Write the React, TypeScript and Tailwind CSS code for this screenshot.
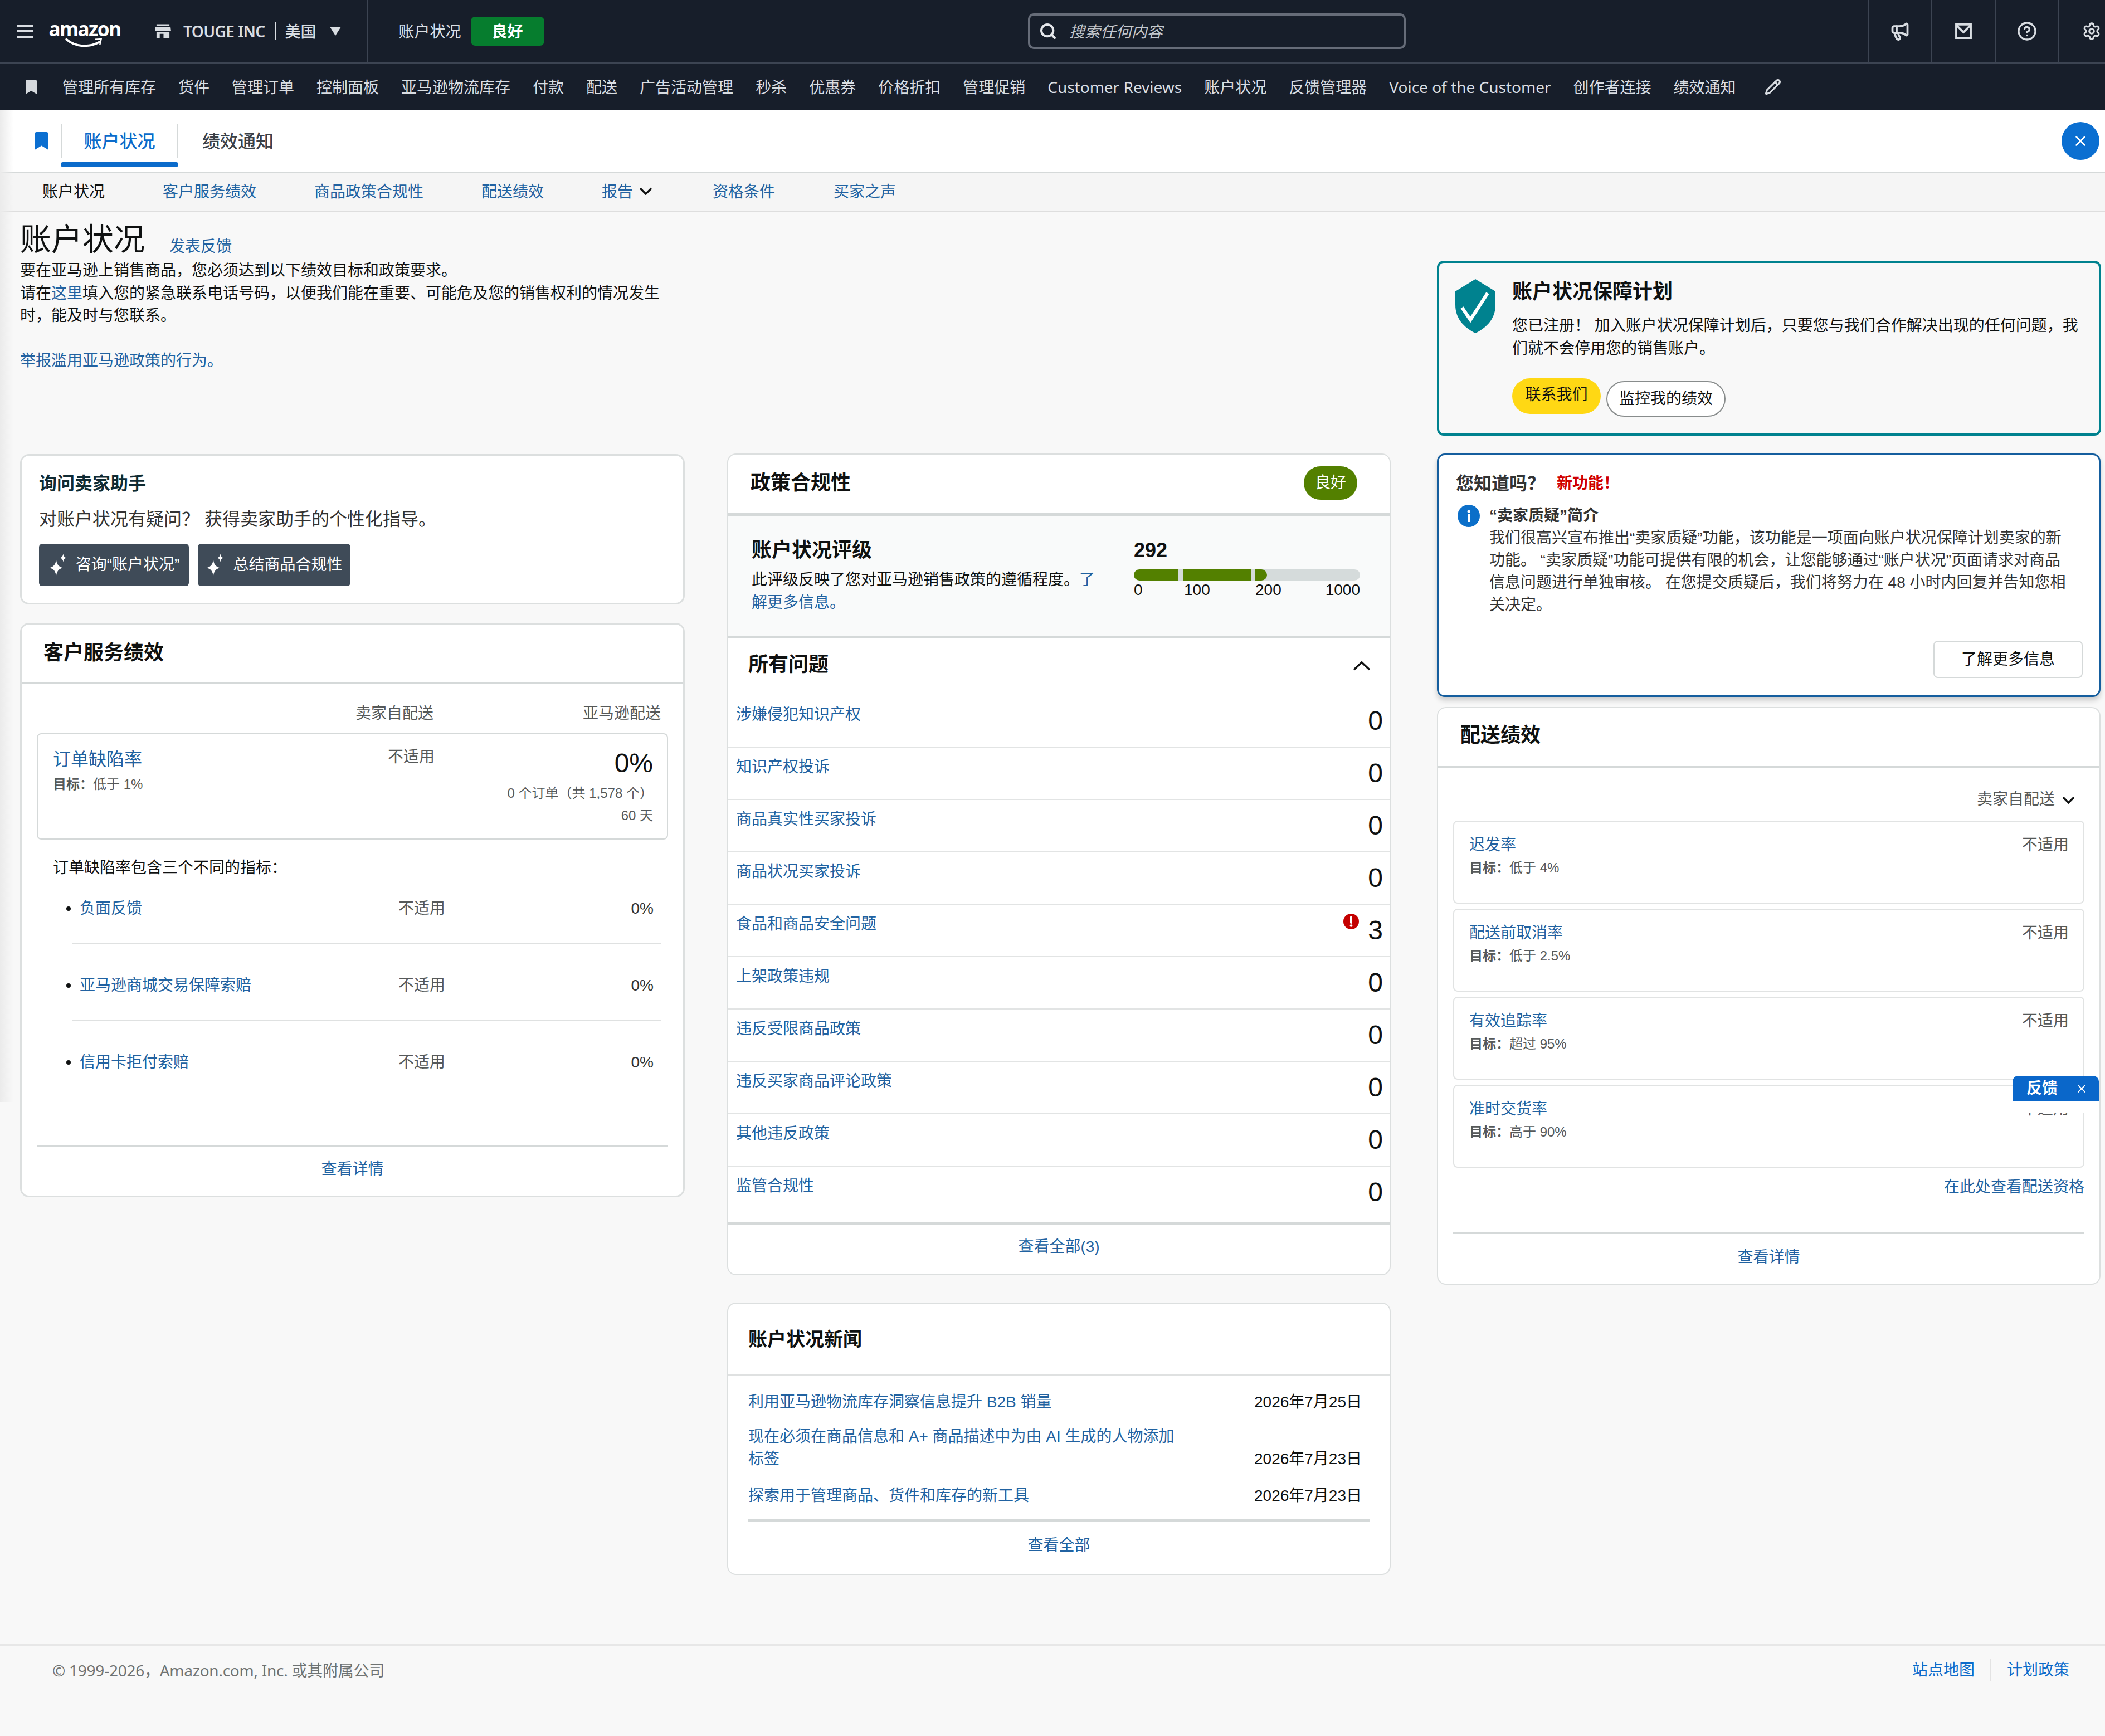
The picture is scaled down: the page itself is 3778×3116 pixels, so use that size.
import { Megaphone, CircleHelp, Settings, Search, X, Pencil } from "lucide-react";

const navItems = [
    "管理所有库存", "货件", "管理订单", "控制面板", "亚马逊物流库存", "付款", "配送", "广告活动管理", "秒杀", "优惠券",
    "价格折扣", "管理促销", "Customer Reviews", "账户状况", "反馈管理器", "Voice of the Customer", "创作者连接", "绩效通知",
];

const subNav = ["客户服务绩效", "商品政策合规性", "配送绩效"];

const issues = [
    { name: "涉嫌侵犯知识产权", count: 0 },
    { name: "知识产权投诉", count: 0 },
    { name: "商品真实性买家投诉", count: 0 },
    { name: "商品状况买家投诉", count: 0 },
    { name: "食品和商品安全问题", count: 3 },
    { name: "上架政策违规", count: 0 },
    { name: "违反受限商品政策", count: 0 },
    { name: "违反买家商品评论政策", count: 0 },
    { name: "其他违反政策", count: 0 },
];

const odrRows = ["负面反馈", "亚马逊商城交易保障索赔", "信用卡拒付索赔"];

const delivery = [
    { name: "迟发率", target: "低于 4%" },
    { name: "配送前取消率", target: "低于 2.5%" },
    { name: "有效追踪率", target: "超过 95%" },
    { name: "准时交货率", target: "高于 90%" },
];

function BookmarkIcon({ className }: { className: string }) {
    return (
        <svg viewBox="0 0 20 26" className={className} fill="currentColor">
            <path d="M3 0h14a3 3 0 0 1 3 3v23l-10-6-10 6V3a3 3 0 0 1 3-3z" />
        </svg>
    );
}

function ChevronDownIcon({ className }: { className: string }) {
    return (
        <svg viewBox="0 0 24 14" className={className} fill="none" stroke="#0f1111" strokeWidth="3.5">
            <path d="M2 2l10 10L22 2" />
        </svg>
    );
}

function Sparkle() {
    return (
        <svg viewBox="0 0 32 40" className="h-[42px] w-[34px] shrink-0" fill="currentColor">
            <path d="M13 11c1 8 4 12 11 14-7 2-10 6-11 14-1-8-4-12-11-14 7-2 10-6 11-14z" />
            <path d="M25 1c.5 4 2 6 5 7-3 1-4.500 3-5 7-.5-4-2-6-5-7 3-1 4.500-3 5-7z" />
        </svg>
    );
}

function App() {
    return (
        <div className="relative min-h-[3116px] w-[3778px] overflow-hidden bg-[#f8f8f8] text-[28px] leading-[40px] text-[#0f1111] font-['Liberation_Sans','Noto_Sans_CJK_SC',sans-serif]">
            {/* top bars */}
            <div className="bg-[#171e2a] text-[#d9dde2] font-['Noto_Sans','Noto_Sans_CJK_SC',sans-serif]">
                <div className="flex h-[114px] items-center border-b-2 border-[#3c4452]">
                    <div className="ml-[30px] flex h-[24px] w-[29px] flex-col justify-between">
                        <div className="h-[4px] bg-[#d9dde2]" />
                        <div className="h-[4px] bg-[#d9dde2]" />
                        <div className="h-[4px] bg-[#d9dde2]" />
                    </div>
                    <div className="ml-[31px] flex w-[124px] flex-col items-center pt-[6px]">
                        <span className="text-[35px] font-bold leading-[46px] tracking-[-1.500px] text-white">amazon</span>
                        <svg viewBox="0 0 90 26" className="-mt-[8px] h-[22px] w-[72px]" fill="none" stroke="white">
                            <path d="M4 4c20 17 50 19 74 6" strokeWidth="5" strokeLinecap="round" />
                            <path d="M68 4l14-1-3 13" strokeWidth="3" />
                        </svg>
                    </div>
                    <svg viewBox="0 0 30 26" className="ml-[64px] h-[26px] w-[29px]" fill="currentColor">
                        <path d="M3 0h24v3H3zM1 5h28l1 8H0zM3 15h24v11H16v-8H9v8H3z" />
                    </svg>
                    <span className="ml-[22px] font-semibold tracking-[-0.600px]">TOUGE INC</span>
                    <div className="ml-[17px] h-[32px] w-[2px] bg-[#d9dde2]" />
                    <span className="ml-[17px] font-medium">美国</span>
                    <svg viewBox="0 0 20 16" className="ml-[24px] h-[16px] w-[20px]" fill="currentColor">
                        <path d="M0 0h20L10 16z" />
                    </svg>
                    <div className="ml-[46px] h-full w-[2px] bg-[#3c4452]" />
                    <span className="ml-[56px]">账户状况</span>
                    <span className="ml-[17px] flex h-[52px] w-[132px] items-center justify-center rounded-[8px] bg-[#067d2e] font-bold text-white">良好</span>
                    <div className="ml-[868px] flex h-[64px] w-[678px] items-center rounded-[10px] border-[4px] border-[#666c78] pl-[16px]">
                        <Search className="h-[32px] w-[32px] text-[#e5e7eb]" strokeWidth={3} />
                        <span className="ml-[22px] italic text-[#c2c6cc]">搜索任何内容</span>
                    </div>
                    <div className="ml-auto flex h-full">
                        <div className="flex w-[114px] items-center justify-center border-l-2 border-[#3c4452]">
                            <Megaphone className="h-[36px] w-[36px]" strokeWidth={2.5} />
                        </div>
                        <div className="flex w-[114px] items-center justify-center border-l-2 border-[#3c4452]">
                            <svg viewBox="0 0 32 30" className="h-[28px] w-[32px]" fill="none" stroke="currentColor" strokeWidth="4">
                                <rect x="2" y="2" width="28" height="26" />
                                <path d="M3 4l13 13L29 4" />
                            </svg>
                        </div>
                        <div className="flex w-[114px] items-center justify-center border-l-2 border-[#3c4452]">
                            <CircleHelp className="h-[36px] w-[36px]" strokeWidth={2.2} />
                        </div>
                        <div className="flex w-[84px] items-center justify-start border-l-2 border-[#3c4452] pl-[41px]">
                            <Settings className="h-[34px] w-[34px] shrink-0" strokeWidth={2.2} />
                        </div>
                    </div>
                </div>
                <div className="flex h-[84px] items-center pl-[46px]">
                    <BookmarkIcon className="mr-[46px] h-[26px] w-[20px] text-[#d5d9dd]" />
                    <div className="flex items-center gap-[40px] whitespace-nowrap">
                        {navItems.map((item) => (
                            <span key={item}>{item}</span>
                        ))}
                    </div>
                    <Pencil className="ml-[51px] h-[30px] w-[30px]" strokeWidth={2.5} />
                </div>
            </div>

            {/* tabs */}
            <div className="relative flex h-[112px] items-center border-b-2 border-[#d5d9d9] bg-white pl-[62px] font-['Noto_Sans','Noto_Sans_CJK_SC',sans-serif] text-[32px]">
                <BookmarkIcon className="h-[32px] w-[25px] text-[#0b6fd1]" />
                <div className="ml-[22px] flex h-full w-[211px] flex-col justify-start">
                    <div className="mt-[25px] flex h-[60px] items-center justify-center border-x-2 border-[#d5d9d9] font-medium text-[#0b6bcb]">账户状况</div>
                    <div className="mt-[8px] h-[8px] rounded-t-[4px] rounded-b-[2px] bg-[#0b6bcb]" />
                </div>
                <span className="ml-[43px] font-medium text-[#3a4048]">绩效通知</span>
                <div className="ml-auto mr-[10px] flex h-[68px] w-[68px] items-center justify-center rounded-full bg-[#0b6fd1] text-white">
                    <X className="h-[30px] w-[30px]" strokeWidth={2} />
                </div>
            </div>
            <div className="flex h-[70px] items-center gap-[104px] border-b-2 border-[#dedede] bg-[#f5f5f5] pb-[2px] pl-[76px] text-[#2162a1] font-['Noto_Sans','Noto_Sans_CJK_SC',sans-serif]">
                <span className="text-[#0f1111]">账户状况</span>
                {subNav.map((s) => (
                    <span key={s}>{s}</span>
                ))}
                <span className="flex items-center">
                    报告
                    <ChevronDownIcon className="ml-[11px] h-[14px] w-[24px]" />
                </span>
                <span className="ml-[4px]">资格条件</span>
                <span className="ml-[1px]">买家之声</span>
            </div>

            {/* intro row */}
            <div className="flex h-[434px] pl-[36px]">
                <div className="w-[1193px] shrink-0">
                    <div className="flex h-[86px] items-end">
                        <h1 className="text-[56px] font-normal leading-[72px]">账户状况</h1>
                        <a className="mb-[3px] ml-[44px] text-[#2162a1]">发表反馈</a>
                    </div>
                    <p className="leading-[40.500px]">要在亚马逊上销售商品，您必须达到以下绩效目标和政策要求。</p>
                    <p className="leading-[40.500px]">
                        请在<a className="text-[#2162a1]">这里</a>填入您的紧急联系电话号码，以便我们能在重要、可能危及您的销售权利的情况发生时，能及时与您联系。
                    </p>
                    <p className="mt-[40px] text-[#2162a1]">
                        举报滥用亚马逊政策的行为<span>。</span>
                    </p>
                </div>
                <div className="ml-[1350px] mt-[88px] flex h-[314px] w-[1192px] shrink-0 rounded-[12px] border-[4px] border-[#00828f] pl-[29px] pt-[29px]">
                    <svg viewBox="0 0 72 97" className="h-[97px] w-[72px] shrink-0">
                        <path d="M36 0l36 22v24c0 24-14 40-36 51C14 86 0 70 0 46V22z" fill="#00828f" />
                        <path d="M12 51l15 22L58 25" fill="none" stroke="white" strokeWidth="6" />
                    </svg>
                    <div className="ml-[30px] mt-[1px]">
                        <h2 className="text-[36px] font-bold leading-[44px]">账户状况保障计划</h2>
                        <p className="mt-[18px] w-[1030px] leading-[41px]">
                            您已注册！ 加入账户状况保障计划后，只要您与我们合作解决出现的任何问题，我们就不会停用您的销售账户。
                        </p>
                        <div className="mt-[33px] flex items-start gap-[10px]">
                            <button className="flex h-[64px] w-[159px] items-center justify-center rounded-full bg-[#ffd814] pb-[4px]">联系我们</button>
                            <button className="mt-[5px] flex h-[64px] w-[214px] items-center justify-center rounded-full border-2 border-[#888c8c] bg-white">监控我的绩效</button>
                        </div>
                    </div>
                </div>
            </div>

            {/* three columns */}
            <div className="flex h-[2137px] pl-[36px]">
                <div className="w-[1193px] shrink-0">
                    <div className="mt-[1px] h-[270px] rounded-[16px] border-[3px] border-[#dcdfdf] bg-white pl-[31px] pt-[28px]">
                        <h3 className="text-[32px] font-semibold leading-[44px] text-[#0f2b33]">询问卖家助手</h3>
                        <p className="mt-[20px] text-[32px] leading-[44px] text-[#333]">对账户状况有疑问？ 获得卖家助手的个性化指导。</p>
                        <div className="mt-[22px] flex gap-[16px] text-white">
                            <button className="flex h-[76px] w-[269px] items-center justify-center gap-[15px] rounded-[6px] bg-[#3f4b58]">
                                <Sparkle />
                                咨询“账户状况”
                            </button>
                            <button className="flex h-[76px] w-[274px] items-center justify-center gap-[15px] rounded-[6px] bg-[#3f4b58]">
                                <Sparkle />
                                总结商品合规性
                            </button>
                        </div>
                    </div>

                    <div className="mt-[33px] h-[1031px] rounded-[16px] border-[3px] border-[#dcdfdf] bg-white">
                        <div className="flex h-[107px] items-center border-b-4 border-[#d5d9d9] pb-[2px] pl-[39px]">
                            <h3 className="text-[36px] font-bold">客户服务绩效</h3>
                        </div>
                        <div className="px-[27px]">
                            <div className="flex h-[88px] justify-end pt-[33px] text-[#565959]">
                                <span className="w-[712px] text-right">卖家自配送</span>
                                <span className="w-[421px] pr-[13px] text-right">亚马逊配送</span>
                            </div>
                            <div className="flex h-[191px] rounded-[8px] border-2 border-[#d5d9d9]">
                                <div className="flex w-[712px] justify-between">
                                    <div className="pl-[27px] pt-[23px]">
                                        <a className="block text-[32px] leading-[44px] text-[#2162a1]">订单缺陷率</a>
                                        <p className="mt-[5px] text-[24px] leading-[36px] text-[#565959]">
                                            <b>目标：</b>低于 1%
                                        </p>
                                    </div>
                                    <span className="pt-[21px] text-[#565959]">不适用</span>
                                </div>
                                <div className="flex-1 pr-[25px] pt-[24px] text-right">
                                    <div className="text-[48px] leading-[56px]">0%</div>
                                    <div className="mt-[8px] text-[24px] leading-[36px] text-[#565959]">0 个订单（共 1,578 个）</div>
                                    <div className="mt-[4px] text-[24px] leading-[36px] text-[#565959]">60 天</div>
                                </div>
                            </div>
                            <p className="mt-[31px] pl-[29px]">订单缺陷率包含三个不同的指标：</p>
                            <div className="ml-[64px] mt-[33px] w-[1056px]">
                                {odrRows.map((row, index) => (
                                    <div
                                        key={row}
                                        className={index < 2 ? "mb-[55px] flex border-b-2 border-[#dfe1e1] pb-[41px]" : "flex"}
                                    >
                                        <div className="flex w-[669px] items-center">
                                            <div className="-ml-[11px] h-[8px] w-[8px] rounded-full bg-[#0f1111]" />
                                            <a className="ml-[16px] text-[#2162a1]">{row}</a>
                                            <span className="ml-auto text-[#565959]">不适用</span>
                                        </div>
                                        <span className="flex-1 pr-[13px] text-right text-[#333]">0%</span>
                                    </div>
                                ))}
                            </div>
                            <div className="mt-[128px] flex h-[84px] items-center justify-center border-t-4 border-[#d5d9d9] text-[#2162a1]">查看详情</div>
                        </div>
                    </div>
                </div>

                <div className="ml-[76px] w-[1191px] shrink-0">
                    <div className="h-[1475px] rounded-[16px] border-2 border-[#dcdfdf] bg-white">
                        <div className="flex h-[110px] items-center justify-between border-b-[6px] border-[#d5d9d9] pb-[2px] pl-[40px] pr-[58px]">
                            <h3 className="text-[36px] font-bold">政策合规性</h3>
                            <span className="flex h-[60px] w-[96px] items-center justify-center rounded-full bg-[#538000] text-white">良好</span>
                        </div>
                        <div className="flex h-[220px] border-b-4 border-[#d5d9d9] bg-[#f9fafa] pl-[42px] pt-[40px]">
                            <div className="w-[686px]">
                                <h3 className="text-[36px] font-bold leading-[44px]">账户状况评级</h3>
                                <p className="mt-[10px] w-[625px] leading-[41px]">
                                    此评级反映了您对亚马逊销售政策的遵循程度。<a className="text-[#2162a1]">了解更多信息。</a>
                                </p>
                            </div>
                            <div className="w-[406px]">
                                <div className="text-[36px] font-bold leading-[44px]">292</div>
                                <div className="mt-[12px] flex h-[20px] gap-[8px] rounded-full bg-[#d5dbdb]">
                                    <div className="w-[80px] rounded-l-full bg-[#538000]" />
                                    <div className="w-[122px] bg-[#538000]" />
                                    <div className="w-[21px] rounded-r-full bg-[#538000]" />
                                </div>
                                <div className="flex leading-[34px]">
                                    <span className="w-[90px]">0</span>
                                    <span className="w-[128px]">100</span>
                                    <span>200</span>
                                    <span className="ml-auto">1000</span>
                                </div>
                            </div>
                        </div>
                        <div className="flex h-[102px] items-center justify-between pb-[8px] pl-[36px] pr-[34px]">
                            <h3 className="text-[36px] font-bold">所有问题</h3>
                            <svg viewBox="0 0 32 18" className="mt-[4px] h-[18px] w-[32px]" fill="none" stroke="#0f1111" strokeWidth="3.5">
                                <path d="M2 16L16 3l14 13" />
                            </svg>
                        </div>
                        {issues.map((issue) => (
                            <div key={issue.name} className="flex h-[94px] items-start border-b-2 border-[#e2e4e4] pl-[14px] pr-[12px]">
                                <a className="pt-[15px] text-[#2162a1]">{issue.name}</a>
                                {issue.count > 0 && (
                                    <svg viewBox="0 0 28 28" className="ml-auto mr-[16px] mt-[16px] h-[28px] w-[28px]">
                                        <circle cx="14" cy="14" r="14" fill="#c40000" />
                                        <path d="M14 6v10" stroke="white" strokeWidth="4" strokeLinecap="round" />
                                        <circle cx="14" cy="21.500" r="2.300" fill="white" />
                                    </svg>
                                )}
                                <span className={issue.count > 0 ? "pt-[18px] text-[48px] leading-[56px]" : "ml-auto pt-[18px] text-[48px] leading-[56px]"}>{issue.count}</span>
                            </div>
                        ))}
                        <div className="flex h-[104px] items-start border-b-4 border-[#d5d9d9] pl-[14px] pr-[12px]">
                            <a className="pt-[15px] text-[#2162a1]">监管合规性</a>
                            <span className="ml-auto pt-[18px] text-[48px] leading-[56px]">0</span>
                        </div>
                        <div className="flex h-[80px] items-center justify-center text-[#2162a1]">查看全部(3)</div>
                    </div>

                    <div className="mt-[49px] h-[489px] rounded-[16px] border-2 border-[#dcdfdf] bg-white">
                        <div className="flex h-[129px] items-center border-b-2 border-[#dfe1e1] pl-[36px]">
                            <h3 className="text-[34px] font-bold">账户状况新闻</h3>
                        </div>
                        <div className="pl-[36px] pr-[50px] pt-[28px]">
                            <div className="flex items-end justify-between">
                                <a className="text-[#2162a1]">利用亚马逊物流库存洞察信息提升 B2B 销量</a>
                                <span>2026年7月25日</span>
                            </div>
                            <div className="mt-[22px] flex items-end justify-between">
                                <a className="w-[780px] text-[#2162a1]">现在必须在商品信息和 A+ 商品描述中为由 AI 生成的人物添加标签</a>
                                <span>2026年7月23日</span>
                            </div>
                            <div className="mt-[26px] flex items-end justify-between">
                                <a className="text-[#2162a1]">探索用于管理商品、货件和库存的新工具</a>
                                <span>2026年7月23日</span>
                            </div>
                        </div>
                        <div className="mx-[35px] mt-[22px] flex h-[90px] items-center justify-center border-t-4 border-[#d5d9d9] text-[#2162a1]">查看全部</div>
                    </div>
                </div>

                <div className="ml-[83px] w-[1191px] shrink-0">
                    <div className="h-[437px] rounded-[14px] border-[3px] border-[#155e9e] bg-white pl-[31px] pr-[29px] pt-[29px] shadow-[0_6px_10px_rgba(0,0,0,0.18)]">
                        <div className="flex items-center">
                            <h3 className="text-[32px] font-bold leading-[44px] text-[#333]">您知道吗？</h3>
                            <span className="ml-[21px] font-bold text-[#d00000]">新功能！</span>
                        </div>
                        <div className="mt-[16px] flex">
                            <div className="ml-[3px] flex h-[40px] w-[40px] shrink-0 items-center justify-center rounded-full bg-[#0b6fc9]">
                                <svg viewBox="0 0 6 22" className="h-[22px] w-[6px]" fill="white">
                                    <circle cx="3" cy="3" r="2.500" />
                                    <rect x="1" y="8" width="4" height="14" />
                                </svg>
                            </div>
                            <div className="ml-[17px] w-[1050px]">
                                <b className="block text-[#333]">“卖家质疑”简介</b>
                                <p className="text-[#333]">
                                    我们很高兴宣布推出“卖家质疑”功能，该功能是一项面向账户状况保障计划卖家的新功能。 “卖家质疑”功能可提供有限的机会，让您能够通过“账户状况”页面请求对商品信息问题进行单独审核。 在您提交质疑后，我们将努力在 48 小时内回复并告知您相关决定。
                                </p>
                            </div>
                        </div>
                        <div className="mt-[44px] flex justify-end">
                            <button className="h-[67px] w-[268px] rounded-[8px] border-2 border-[#d5d9d9]">了解更多信息</button>
                        </div>
                    </div>

                    <div className="mt-[18px] h-[1037px] rounded-[16px] border-2 border-[#dcdfdf] bg-white">
                        <div className="flex h-[108px] items-center border-b-4 border-[#d5d9d9] pl-[40px]">
                            <h3 className="pb-[6px] text-[36px] font-bold">配送绩效</h3>
                        </div>
                        <div className="px-[27px]">
                            <div className="flex h-[94px] items-start justify-end pr-[17px] pt-[36px] text-[#565959]">
                                卖家自配送
                                <ChevronDownIcon className="ml-[13px] mt-[14px] h-[14px] w-[23px]" />
                            </div>
                            {delivery.map((d) => (
                                <div key={d.name} className="mb-[9px] flex h-[149px] justify-between rounded-[8px] border-2 border-[#e1e3e3] pl-[27px] pr-[26px] pt-[22px]">
                                    <div>
                                        <a className="block text-[#2162a1]">{d.name}</a>
                                        <p className="mt-[3px] text-[24px] leading-[36px] text-[#565959]">
                                            <b>目标：</b>{d.target}
                                        </p>
                                    </div>
                                    <span className="text-[#565959]">不适用</span>
                                </div>
                            ))}
                            <div className="mt-[15px] text-right text-[#2162a1]">在此处查看配送资格</div>
                            <div className="mt-[60px] flex h-[88px] items-center justify-center border-t-4 border-[#d5d9d9] text-[#2162a1]">查看详情</div>
                        </div>
                    </div>
                </div>
            </div>

            {/* footer */}
            <div className="flex h-[90px] items-center justify-between border-t-[3px] border-[#e7e7e7] pl-[94px] pr-[64px]">
                <span className="tracking-[-0.250px] text-[#6f7373] font-['Noto_Sans','Noto_Sans_CJK_SC',sans-serif]">© 1999-2026，Amazon.com, Inc. 或其附属公司</span>
                <div className="flex items-center text-[#0b6bcb]">
                    <span>站点地图</span>
                    <div className="mx-[28px] h-[40px] w-[2px] bg-[#e3e3e3]" />
                    <span>计划政策</span>
                </div>
            </div>

            {/* left edge shadow */}
            <div className="pointer-events-none absolute left-0 top-[198px] h-[1780px] w-[24px] bg-gradient-to-r from-[#ebebeb] to-transparent" />

            {/* feedback tab */}
            <div className="absolute left-[3612px] top-[1931px] h-[66px] w-[155px] bg-white">
                <div className="flex h-[46px] items-center justify-between rounded-t-[10px] bg-[#0a67ca] pl-[25px] pr-[19px] text-white">
                    <b>反馈</b>
                    <X className="h-[24px] w-[24px]" strokeWidth={2} />
                </div>
            </div>
        </div>
    );
}

export default App;
